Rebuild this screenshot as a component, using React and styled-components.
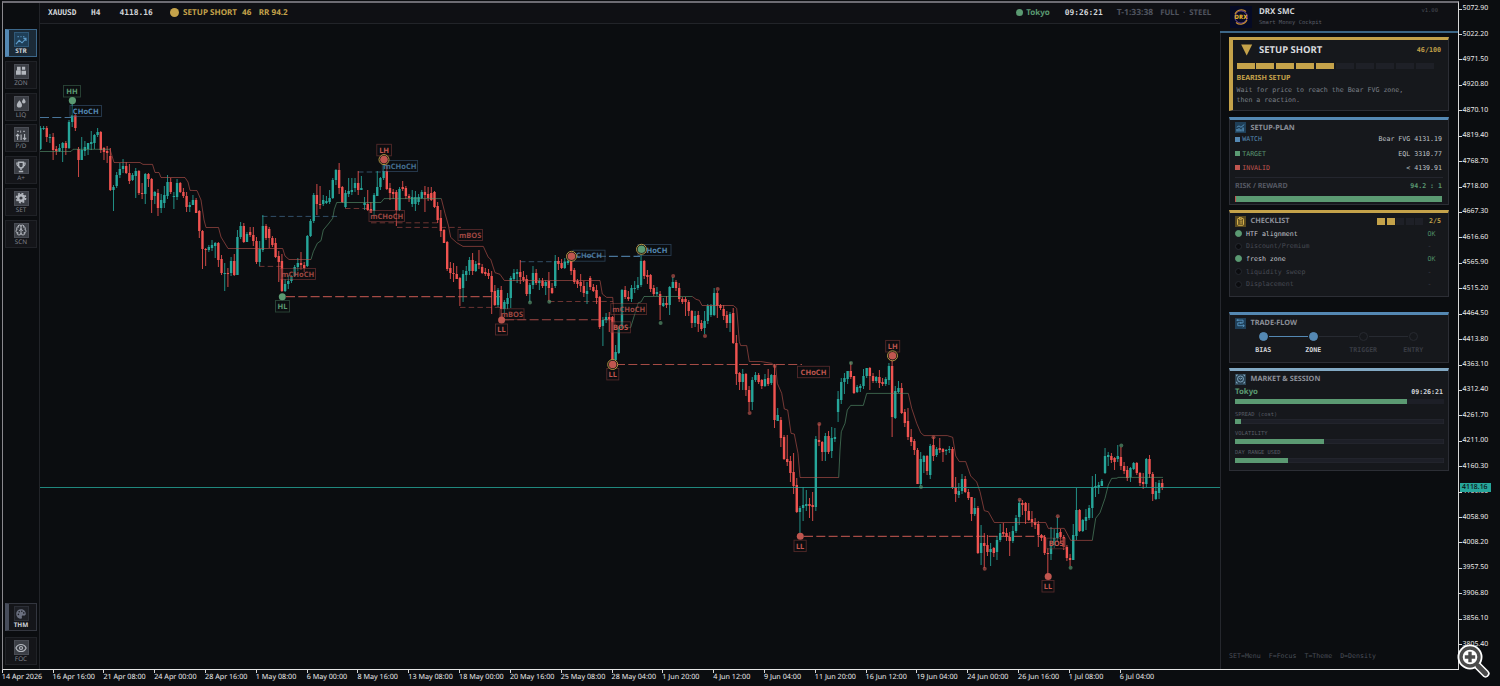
import React from 'react'
import styled, { createGlobalStyle } from 'styled-components'
import { Trophy, Brain, Eye, ClipboardList } from 'lucide-react'

const UP = '#26a69a';
const DOWN = '#f05350';
const GREEN = '#5b9a72';
const RED = '#c0564f';
const BLUE = '#5488b3';
const GOLD = '#c4a24a';

// each bar: direction, high, body top, body bottom, low
const BARS = `
u 126 128 149 150,u 126 128 129 130,d 126 128 137 142,u 134 137 138 143,d 133 137 150 160,d 146 149 151 155,u 144 148 151 152,u 142 143 148 162,
d 141 143 148 155,u 120 122 148 149,u 100 115 122 127,d 114 115 128 131,d 147 149 160 177,u 137 150 160 160,u 141 147 151 156,u 144 143 149 155,
u 131 142 144 150,u 134 135 143 149,u 128 132 135 137,d 131 132 150 153,d 147 148 152 160,d 146 151 153 163,d 148 156 190 191,u 185 187 190 211,
u 172 175 186 188,u 163 169 175 178,u 159 166 169 173,d 162 166 173 174,d 164 173 181 184,u 173 175 180 181,u 168 171 176 198,d 170 171 193 195,
d 183 193 194 199,u 173 174 194 204,d 173 174 179 187,d 178 179 200 213,u 191 192 196 204,d 189 193 208 216,u 194 200 208 213,u 186 195 203 208,
u 175 182 196 199,d 178 182 192 194,u 192 196 197 209,u 179 183 197 200,d 182 183 192 193,d 188 192 196 198,d 192 196 207 212,u 202 205 207 212,
u 195 200 205 205,d 198 200 213 213,d 210 211 231 238,d 230 231 249 269,d 248 249 250 266,u 245 247 250 252,u 240 245 248 251,u 242 243 246 258,
d 242 243 260 267,d 255 259 273 275,u 263 273 274 291,d 268 273 274 287,u 257 261 273 276,d 254 261 275 276,u 230 237 275 275,u 222 226 237 239,
d 223 226 242 243,u 232 234 242 242,d 227 232 235 237,d 227 235 241 246,d 237 241 262 264,u 241 249 262 266,u 215 226 250 252,d 224 226 238 240,
d 227 229 238 248,d 236 238 245 247,d 238 243 257 258,d 251 256 262 282,d 254 261 291 292,u 279 284 291 292,u 275 281 284 289,u 275 277 281 283,
u 265 267 276 277,u 258 263 267 271,d 252 263 265 270,d 262 265 268 272,u 235 236 266 267,u 219 221 236 237,u 193 195 221 223,d 184 195 204 215,
d 186 204 205 209,u 195 200 204 206,u 196 201 203 204,u 190 198 202 204,u 178 180 198 199,u 169 170 180 185,d 163 170 188 194,d 186 187 202 203,
u 190 193 207 208,u 178 191 194 197,u 178 190 192 195,u 178 183 188 192,d 171 183 190 195,u 176 188 190 190,u 197 203 205 210,d 190 204 210 211,
d 202 209 213 213,u 193 195 211 216,u 171 187 196 196,u 177 178 187 190,u 162 171 178 180,d 163 171 189 190,d 183 188 193 200,d 189 192 194 199,
d 190 192 210 226,u 187 189 210 211,d 181 187 189 191,d 186 188 196 199,d 194 196 198 202,u 190 197 204 207,u 191 197 204 211,u 194 197 202 205,
u 190 192 198 199,d 186 192 195 212,d 187 194 198 201,d 187 193 200 201,d 191 192 207 208,d 202 206 220 223,d 210 218 231 237,d 229 230 243 243,
d 241 242 269 271,d 262 268 273 279,d 263 273 274 282,d 266 274 279 279,d 277 278 289 306,u 270 274 288 302,u 266 271 275 281,u 257 260 271 275,
d 253 260 271 275,u 261 264 271 272,d 250 263 265 269,d 264 267 273 274,d 268 272 274 276,d 269 273 276 279,d 271 276 292 314,d 285 291 305 306,
u 288 290 305 307,d 286 290 309 319,u 300 302 309 313,u 293 298 304 309,u 276 278 298 308,u 269 273 279 281,u 269 272 274 283,d 260 272 277 284,
d 271 277 280 282,d 275 279 294 296,u 283 285 294 302,u 266 273 285 289,d 269 273 283 285,u 278 281 283 290,d 278 281 286 288,u 280 282 286 295,
d 272 281 288 301,d 283 288 293 294,u 255 261 286 288,d 257 261 264 270,d 259 263 268 269,u 258 262 268 269,u 256 261 263 265,d 257 261 271 275,
d 268 270 282 284,d 279 281 284 288,d 274 282 286 292,d 281 286 293 297,u 282 291 294 304,d 276 278 287 290,d 284 287 291 292,d 285 290 298 304,
d 296 297 327 329,u 317 320 326 346,u 313 317 320 323,d 312 317 319 332,d 316 317 360 362,u 345 352 360 362,u 326 327 353 354,u 289 290 327 329,
d 286 290 297 299,d 291 297 299 301,u 285 288 299 302,u 281 288 289 293,u 277 285 288 290,u 251 261 285 287,d 260 261 276 279,d 270 275 277 284,
d 274 275 289 292,d 285 288 294 296,u 287 292 294 296,d 291 294 305 320,u 298 303 306 307,d 296 303 305 308,u 286 287 305 315,u 277 282 288 288,
d 280 282 288 291,d 283 288 299 302,d 297 299 302 304,d 297 299 302 316,d 300 302 311 316,d 310 311 323 328,u 311 316 323 327,d 311 315 324 332,
d 320 323 329 331,u 311 321 328 334,u 304 306 321 324,u 304 306 315 317,u 288 293 315 316,d 291 293 306 318,d 304 305 308 310,d 305 309 316 320,
d 311 315 323 328,u 312 314 323 332,d 308 313 343 344,d 335 343 374 385,d 372 373 382 390,u 369 374 382 390,d 373 374 390 396,d 386 390 402 411,
u 377 380 402 410,u 372 375 380 382,d 373 375 382 384,d 379 380 386 389,u 374 379 386 387,d 369 378 384 386,u 374 375 383 385,d 364 375 420 428,
u 408 415 421 421,d 417 420 438 447,d 435 437 459 460,d 435 459 462 466,d 456 461 473 482,d 453 472 486 494,d 478 485 512 513,u 506 508 512 535,
u 487 505 508 521,u 490 504 506 511,d 498 504 506 518,d 492 505 507 521,u 436 439 507 511,d 424 440 442 446,d 441 442 452 461,u 433 436 452 461,
d 431 436 452 454,u 427 438 451 458,u 428 437 439 442,u 391 399 412 422,u 378 382 400 404,u 373 378 382 394,u 371 371 379 384,d 362 371 377 379,
d 376 376 393 394,u 385 387 392 393,u 384 386 388 392,u 369 376 386 389,u 368 368 376 378,d 367 368 376 390,d 373 376 381 383,u 376 377 381 383,
d 370 377 383 388,d 378 382 384 386,u 377 379 384 386,u 363 366 380 385,d 360 366 417 437,u 386 391 418 419,u 381 388 392 393,d 383 388 413 414,
d 409 412 423 427,d 408 421 437 440,d 429 437 442 446,d 439 441 450 455,d 448 450 484 484,u 452 459 484 486,u 455 456 462 473,d 455 456 471 475,
u 444 446 475 479,d 437 445 456 461,u 447 449 455 457,d 438 448 450 453,d 448 449 452 462,u 449 450 451 455,u 446 449 450 453,d 447 449 488 489,
d 477 487 494 502,u 483 491 495 498,u 474 479 491 494,d 476 479 492 493,d 489 492 498 500,d 497 497 514 521,u 498 508 514 516,d 506 508 553 554,
u 525 543 553 565,d 533 543 546 568,d 535 545 552 556,u 543 549 552 566,d 547 548 553 557,u 536 540 552 560,u 524 533 540 542,d 523 532 534 536,
d 528 533 537 541,d 532 537 541 556,u 526 531 541 543,u 515 518 531 533,u 500 503 517 525,d 500 503 505 515,d 502 503 511 524,d 503 511 520 521,
d 511 519 522 527,d 518 522 525 529,d 521 524 535 547,d 534 535 538 541,d 535 537 553 555,d 548 553 554 574,u 527 545 554 560,u 529 538 545 548,
u 517 533 538 541,d 529 532 537 544,d 535 537 547 550,d 545 547 558 561,d 554 558 560 566,u 524 535 560 560,u 488 510 536 540,d 509 510 531 532,
u 519 520 531 532,u 509 517 521 530,u 505 508 518 520,u 476 487 508 518,u 474 486 488 497,u 482 485 487 494,u 479 481 486 486,u 448 456 473 474,
u 452 455 457 466,d 453 456 460 463,d 457 458 462 470,u 445 456 459 462,d 447 457 466 470,d 462 466 471 474,d 466 470 478 481,u 467 468 477 482,
u 462 463 469 470,d 462 463 473 475,d 472 473 483 486,d 473 482 484 489,u 458 459 484 487,d 455 459 474 478,d 472 474 494 501,u 482 491 499 500,
u 480 483 493 499,d 479 483 488 490`.trim().split(',').map((bar) => {
    const [dir, high, top, bottom, low] = bar.trim().split(' ');
    return { up: dir === 'u', high: +high, top: +top, bottom: +bottom, low: +low };
});

const FIRST_X = 40.4;
const STEP = 3.178;

const TREND = [
    ['up', '40,151.5 71,151.5 73,149.3 110,149.3'],
    ['down', '110,149.3 114,162.5 140,162.5 143,164.4 152.5,164.4 155,172.5 159,172.5 161,177.5 185,177.5 188,182 190,190.4 197,190.6 201,200 204,220 206,227.5 218.5,227.5 221,237 228,248.5 282.7,248.5 285,256 289,259.5 311,259.5'],
    ['up', '311,259.5 313.3,251.7 317.3,243.3 321,240.7 323.3,230 328.3,224 332.7,218.3 334.3,209.3 336.7,202.5 381,202.5 384,198.6 441.3,198.6'],
    ['down', '441.3,198.6 445,213.3 448.3,225 450.7,237.3 456.7,242.7 463,246.4 483.3,246.4 488.3,257.3 490.7,259.3 495,272.7 500,274.3 504.3,280.5 600,280.5 602.3,294 606.7,297.4 612.7,297.4 615,326 617.7,327.4'],
    ['up', '617.7,327.4 630.7,327.4 635,313.3 638.3,302.7 641,302 644,296.5 692.3,296.5'],
    ['down', '692.3,296.5 696,299.3 699.3,300.3 702,305.5 733.3,305.5 736.7,308.3 739.3,341.7 740.7,345.6 746.7,345.6 749.3,361.5 760.7,361.5 771.7,363.3 775.7,366.7 777.3,383.3 781.7,393.3 784.3,409 787.7,410 791,433.3 794.3,434 798,453.3 800,477.5 838.7,477.5'],
    ['up', '838.7,477.5 840,450 841.3,431.7 845,423.3 847.3,410 850.7,405.4 863.3,405.4 866.7,393.4 908.3,393.4'],
    ['down', '908.3,393.4 911.7,408.3 916.7,423.3 920.7,432.7 924,435.6 947.3,435.6 952.7,437.3 955.7,456 959.3,461.6 965.7,461.6 970.7,476 976.7,482 980,491.7 984.3,510.7 988.3,511.7 994.3,522.5 1045.7,522.5 1048.3,528.4 1064.3,528.4 1070.7,540.4 1092.3,540.4'],
    ['up', '1092.3,540.4 1095.7,518.3 1100,512.7 1105,498.3 1108.3,485 1111.7,478.4 1117,478.2 1118,477.4 1163,477.4']
];

// x1, x2, y, colour, minor
const LEVELS = [
    [40, 72, 117.5, BLUE], [262, 338, 216.4, BLUE, true], [259, 282, 266.4, RED, true],
    [358, 384, 172, BLUE, true], [345, 371, 208.5, RED, true], [371, 440, 222.8, RED, true],
    [397, 461, 227.4, RED, true], [286, 500, 296.6, RED], [460, 501, 307.4, RED, true],
    [520, 566, 261.7, BLUE, true], [549, 613, 301.5, RED, true], [505, 612, 319.8, RED],
    [572, 640, 256.4, BLUE], [616, 802, 364.5, RED], [804, 1045, 536.4, RED]
];

// x, y, radius, colour, ring
const SWINGS = [
    [72.4, 100.6, 3.6, GREEN], [384, 159.6, 3.8, RED, true], [282.3, 296.8, 3.5, GREEN],
    [501.6, 320, 3.5, RED], [571.5, 256.3, 3.8, RED, true], [641.5, 249.3, 3.8, GREEN, true],
    [612.7, 364.5, 3.8, RED, true], [800.3, 536.2, 3.5, RED], [892.5, 355.8, 3.8, RED, true],
    [1048.2, 576.6, 3.5, RED]
];

const PIVOTS = [
    [530, 302.4, 'g'], [549.3, 301.8, 'g'], [673.2, 276], [717.7, 289], [660.6, 323, 'g'], [705, 336],
    [774.7, 366], [749.6, 413], [819.3, 424], [851, 363, 'g'], [933.5, 437.2], [921, 487, 'g'],
    [1019.7, 499.7], [984.7, 568.7], [1057.8, 516.3], [1070.6, 567.8, 'g'], [1121.3, 445.5, 'g']
];

// text, x, y, width, height, colour, dimmed
const TAGS = [
    ['HH', 63.5, 85.5, 17, 11.5, GREEN], ['CHoCH', 70, 105.5, 31.5, 11, BLUE],
    ['mCHoCH', 280, 268.5, 35.5, 11, RED, true], ['HL', 275.5, 300.5, 14, 11.5, GREEN],
    ['LH', 376.8, 144.3, 14.6, 11.5, RED], ['mCHoCH', 382.3, 160.5, 35.3, 11, BLUE, true],
    ['mCHoCH', 369, 210.5, 35.5, 11, RED, true], ['mBOS', 458, 229.5, 24.5, 11, RED, true],
    ['mBOS', 500, 308.8, 24, 10.8, RED, true], ['LL', 495.5, 324, 12, 11, RED],
    ['CHoCH', 573, 250.2, 32, 11, BLUE, true], ['CHoCH', 638, 244.5, 33, 11, BLUE],
    ['mCHoCH', 610.8, 303.6, 35.8, 11, RED, true], ['BOS', 610.8, 321.8, 19.6, 11, RED],
    ['LL', 606.8, 368.5, 12, 11.4, RED], ['CHoCH', 797.5, 366.3, 32, 11.4, RED],
    ['LL', 794, 540.2, 12.2, 11.4, RED], ['LH', 885.7, 340.4, 14, 11.6, RED],
    ['BOS', 1046.8, 538.2, 18.8, 10.6, RED], ['LL', 1042, 580.5, 12, 11.5, RED]
];

const TIMES = ['14 Apr 2026', '16 Apr 16:00', '21 Apr 08:00', '24 Apr 00:00', '28 Apr 16:00', '1 May 08:00',
    '6 May 00:00', '8 May 16:00', '13 May 08:00', '18 May 00:00', '20 May 16:00', '25 May 08:00', '28 May 04:00',
    '1 Jun 20:00', '4 Jun 12:00', '9 Jun 04:00', '11 Jun 20:00', '16 Jun 12:00', '19 Jun 04:00', '24 Jun 00:00',
    '26 Jun 16:00', '1 Jul 08:00', '6 Jul 04:00'];

const PRICES = Array.from({ length: 26 }, (_, i) => (5072.9 - i * 50.7).toFixed(2));

const GlobalStyle = createGlobalStyle`
    * {
        box-sizing: border-box;
    }
    body {
        margin: 0;
        background-color: #0b0d10;
        overflow: hidden;
        font-family: "Noto Sans", sans-serif;
        text-rendering: geometricPrecision;
    }
`;
const Terminal = styled.div`
    width: 1500px;
    height: 686px;
    display: grid;
    grid-template-columns: 1459px 41px;
    grid-template-rows: 670px 16px;
    background-color: #0b0d10;
`;
const Frame = styled.div`
    margin: 1px 0 0 2px;
    display: flex;
    border-top: 2px solid #6d6c73;
    border-left: 1px solid #8a898e;
    border-right: 1px solid #d8d8d8;
    border-bottom: 1px solid #e6e6e6;
`;
const Rail = styled.div`
    width: 37px;
    padding: 26px 2px 4px;
    display: flex;
    flex-direction: column;
    gap: 3.8px;
    border-right: 1px solid #222429;
`;
const Spacer = styled.div`
    flex: ${(p) => (p.$size ? `0 0 ${p.$size}px` : '1')};
`;
const RailButton = styled.div`
    height: 28px;
    flex-shrink: 0;
    display: flex;
    flex-direction: column;
    align-items: center;
    padding: 2px 3px 0 0;
    margin-bottom: ${(p) => p.$last || 0}px;
    border: 1px solid ${(p) => (p.$tone === 'blue' ? '#3c678a' : p.$tone === 'grey' ? '#33363f' : '#202227')};
    border-left: ${(p) => (p.$tone ? '4px solid' : '1px solid')} ${(p) => (p.$tone === 'blue' ? '#5488b3' : p.$tone === 'grey' ? '#474d5b' : '#202227')};
    padding-left: ${(p) => (p.$tone ? 0 : 3)}px;
    background-color: ${(p) => (p.$tone === 'blue' ? '#1b2a37' : '#141519')};
    color: ${(p) => (p.$tone ? '#d2d5d9' : '#7d8089')};
    font-size: 6.4px;
    font-weight: ${(p) => (p.$tone ? 700 : 400)};
    line-height: 8.6px;
`;
const IconBox = styled.div`
    width: ${(p) => p.$size || 15}px;
    height: ${(p) => p.$size || 15}px;
    flex-shrink: 0;
    display: flex;
    align-items: center;
    justify-content: center;
    background-color: ${(p) => p.$bg || '#3b3e45'};
    border: 1px solid ${(p) => p.$edge || '#4a4d55'};
    color: ${(p) => p.$color || '#b3b7be'};
`;
const Main = styled.div`
    width: 1180px;
    display: flex;
    flex-direction: column;
`;
const TopBar = styled.div`
    height: 21px;
    flex-shrink: 0;
    display: flex;
    align-items: center;
    padding: 0 8px 0.6px 8px;
    background-color: #0f1014;
    border-bottom: 1px solid #222429;
    white-space: pre;
`;
const Mono = styled.span`
    font-family: "DejaVu Sans Mono", monospace;
    font-size: ${(p) => p.$size || 6.6}px;
    font-weight: ${(p) => (p.$bold ? 700 : 400)};
    color: ${(p) => p.$color || '#d2d5d9'};
    margin-left: ${(p) => p.$left || 0}px;
    line-height: 10px;
    white-space: pre;
`;
const Label = styled.span`
    font-size: ${(p) => p.$size || 8}px;
    font-weight: 700;
    color: ${(p) => p.$color || '#8b8f98'};
    margin-left: ${(p) => p.$left || 0}px;
    line-height: 12px;
    white-space: pre;
`;
const Dot = styled.span`
    width: ${(p) => p.$size || 8}px;
    height: ${(p) => p.$size || 8}px;
    border-radius: 50%;
    flex-shrink: 0;
    margin-left: ${(p) => p.$left || 0}px;
    background-color: ${(p) => p.$color};
    border: ${(p) => (p.$edge ? `1px solid ${p.$edge}` : 'none')};
`;
const Chart = styled.svg`
    display: block;
    width: 1180px;
    height: 645px;
`;
const Side = styled.div`
    width: 238px;
    display: flex;
    flex-direction: column;
`;
const Brand = styled.div`
    height: 30px;
    flex-shrink: 0;
    display: flex;
    padding: 3px 20px 0 9.5px;
    background-color: #0f1014;
    border-bottom: 2px solid #3d6787;
`;
const BrandText = styled.div`
    flex: 1;
    display: flex;
    flex-direction: column;
    margin-left: 7.5px;
`;
const Cards = styled.div`
    flex: 1;
    display: flex;
    flex-direction: column;
    padding: 4.4px 9px 8px 8px;
    border-left: 1px solid #25272d;
`;
const Card = styled.div`
    height: ${(p) => p.$height}px;
    margin-bottom: ${(p) => p.$after}px;
    flex-shrink: 0;
    display: flex;
    flex-direction: column;
    background-color: #16181c;
    border: 1px solid #2c2e35;
    border-top: 3px solid ${(p) => p.$accent};
    border-left: ${(p) => (p.$thick ? `4.5px solid ${p.$accent}` : '1px solid #2c2e35')};
    padding: ${(p) => p.$pad || '2px 5px 0 5px'};
`;
const Row = styled.div`
    height: ${(p) => p.$height}px;
    flex-shrink: 0;
    display: flex;
    align-items: center;
    margin-top: ${(p) => p.$top || 0}px;
`;
const Segment = styled.div`
    width: ${(p) => p.$width}px;
    height: ${(p) => p.$height}px;
    margin-right: ${(p) => p.$gap}px;
    background-color: ${(p) => (p.$on ? GOLD : '#1e2027')};
`;
const Square = styled.span`
    width: 5px;
    height: 5px;
    background-color: ${(p) => p.$color};
`;
const Rule = styled.div`
    height: 1px;
    flex-shrink: 0;
    margin-top: 2px;
    background-color: #24262e;
`;
const Track = styled.div`
    height: ${(p) => p.$height}px;
    width: ${(p) => p.$width || 209}px;
    flex-shrink: 0;
    margin-top: ${(p) => p.$top || 0}px;
    margin-bottom: ${(p) => p.$after || 0}px;
    background-color: #1d1f27;
    box-shadow: ${(p) => (p.$edge ? 'inset 0 0 0 0.5px #282a33' : 'none')};
`;
const Fill = styled.div`
    height: 100%;
    background-color: ${GREEN};
    border-left: ${(p) => (p.$risk ? `1px solid ${RED}` : 'none')};
`;
const Steps = styled.div`
    display: flex;
    margin: 2.5px 0 0 3.2px;
`;
const Step = styled.div`
    width: 50px;
    display: flex;
    flex-direction: column;
    align-items: center;
    gap: 3px;
`;
const StepTrack = styled.div`
    width: 50px;
    height: 10px;
    display: grid;
    grid-template-columns: 1fr 9px 1fr;
    align-items: center;
    column-gap: 1px;
`;
const Link = styled.div`
    height: 1px;
    background-color: ${(p) => p.$color};
`;
const Hints = styled.div`
    margin-top: auto;
    height: 10.5px;
    display: flex;
`;
const PriceAxis = styled.div`
    position: relative;
    overflow: hidden;
`;
const PriceLabel = styled.div`
    height: 25.43px;
    display: flex;
    align-items: center;
    margin-top: ${(p) => (p.$first ? -3.6 : 0)}px;
    color: #ececec;
    font-size: 6.9px;
    line-height: 10px;
    &::before {
        content: '';
        width: 3px;
        height: 1px;
        margin-right: 0.6px;
        background-color: #d8d8d8;
    }
`;
const PriceNow = styled.div`
    position: absolute;
    left: 1px;
    top: 483px;
    width: 31px;
    height: 9px;
    padding-left: 2px;
    background-color: ${UP};
    color: #0b0d10;
    font-size: 6.9px;
    font-weight: 500;
    line-height: 9px;
`;
const TimeAxis = styled.div`
    grid-column: 1 / 3;
    display: flex;
    padding-left: 1.8px;
`;
const TimeLabel = styled.div`
    width: 50.82px;
    flex-shrink: 0;
    color: #ececec;
    font-size: 7.2px;
    line-height: 9px;
    white-space: nowrap;
    &::before {
        content: '';
        display: block;
        width: 1px;
        height: 3px;
        background-color: #d8d8d8;
    }
`;
const Magnifier = styled.svg`
    position: absolute;
    left: 1455.5px;
    top: 642px;
    width: 34px;
    height: 36px;
`;

const Glyph = ({ size = 12, children }) => (
    <svg width={size} height={size} viewBox="0 0 12 12" fill="none" stroke="currentColor" strokeWidth="1.1">
        {children}
    </svg>
)

const StructureIcon = () => (
    <Glyph>
        <path d="M1 10.2L4.2 6.4L7 8.8L11 4.6M8.4 4.4H11V7" />
        <path d="M2.4 2.6h1.6M5.4 2.6h1.2M8 2.6h1.4" opacity="0.75" />
    </Glyph>
)
const ZonesIcon = () => (
    <Glyph>
        <g fill="currentColor" stroke="none">
            <path d="M2 1.8h3.6v4H2zM7 1.8h3.2v3H7z" />
            <path d="M1 5.4h4.8v4.4H1zM6.5 5.8h4.5v4H6.5z" />
        </g>
    </Glyph>
)
const LiquidityIcon = () => (
    <Glyph>
        <g fill="currentColor" stroke="none">
            <path d="M4.4 3.2C5.8 5.2 7 6.4 7 8A2.6 2.6 0 0 1 1.8 8C1.8 6.4 3.2 5.2 4.4 3.2z" />
            <path d="M8.8 1.2C9.8 2.8 10.6 3.6 10.6 4.8A1.8 1.8 0 0 1 7 4.8C7 3.6 8 2.8 8.8 1.2z" />
        </g>
    </Glyph>
)
const PremiumIcon = () => (
    <Glyph>
        <path d="M2.6 11V5.8M1 7.2L2.6 5.4L4.2 7.2M9.6 5v5.2M8 8.8l1.6 1.8L11.2 8.8M6.1 5.4V11" />
        <path d="M2 2.4h2M5.6 1.6v2.2M8 2.4h2" opacity="0.75" />
    </Glyph>
)
const GearIcon = () => (
    <Glyph>
        <circle cx="6" cy="6" r="2.8" strokeWidth="2.4" />
        <circle cx="6" cy="6" r="4.6" strokeWidth="1.6" strokeDasharray="1.9 1.7" />
    </Glyph>
)
const PaletteIcon = () => (
    <Glyph>
        <path d="M6 1.2A4.8 4.8 0 1 0 6 10.8C7.2 10.8 7 9.6 6.8 8.8C6.6 7.8 7.4 7.4 8.4 7.6C10 7.8 10.8 7 10.8 5.8C10.8 3.2 8.6 1.2 6 1.2z" fill="currentColor" stroke="none" />
        <g fill="#1d1f25" stroke="none">
            <circle cx="3.4" cy="6.4" r="0.8" />
            <circle cx="4.2" cy="3.8" r="0.8" />
            <circle cx="6.8" cy="3.2" r="0.8" />
            <circle cx="8.8" cy="4.9" r="0.8" />
        </g>
    </Glyph>
)
const MedalIcon = () => (
    <Glyph>
        <path d="M3.6 1.2h4.8v3.4a2.4 2.4 0 0 1-4.8 0zM6 7v2M3.8 10.4h4.4" strokeWidth="1.5" />
        <path d="M3.4 2H1.8c0 2 .6 2.8 1.8 3M8.6 2h1.6c0 2-.6 2.8-1.8 3" />
    </Glyph>
)
const TrophyBase = () => <Trophy size={11} strokeWidth={2.6} />
const ScanIcon = () => <Brain size={12} strokeWidth={2} />
const FocusIcon = () => <Eye size={12} strokeWidth={2.4} />
const PlanIcon = () => (
    <Glyph size={10}>
        <path d="M1.4 10.6V7.4M4 10.6V6.2M6.6 10.6V7.6M9.4 10.6V5.4" strokeWidth="1.6" />
        <path d="M1 5L4 3.2L6.6 5L11 1.4" />
    </Glyph>
)
const ChecklistIcon = () => <ClipboardList size={9} strokeWidth={2.6} />
const FlowIcon = () => (
    <Glyph size={10}>
        <path d="M0.6 2.2H9.4V5.8H2.4V9.6H11M9 7.8l2 1.8l-2 1.8M2.4 0.8v2.6M6.4 4.4v2.8" />
    </Glyph>
)
const SessionIcon = () => (
    <Glyph size={10}>
        <circle cx="6" cy="6" r="4" />
        <path d="M4.4 4.6L6 6.4L8 4.8M0.6 2.4V0.6h1.8M11.4 9.6v1.8H9.6M0.6 9.6v1.8h1.8M11.4 2.4V0.6H9.6" />
    </Glyph>
)

const RailItem = ({ icon: Icon, text, tone, last }) => (
    <RailButton $tone={tone} $last={last}>
        <IconBox
            $bg={tone === 'blue' ? '#1f3f58' : tone === 'grey' ? '#1d1f25' : undefined}
            $edge={tone === 'blue' ? '#2f5878' : tone === 'grey' ? '#2b2e36' : undefined}
            $color={tone === 'blue' ? '#5e9cc9' : tone === 'grey' ? '#6b7080' : undefined}
        >
            <Icon />
        </IconBox>
        {text}
    </RailButton>
)

const CardTitle = ({ icon: Icon, text, color, bg, children }) => (
    <Row $height={12}>
        <IconBox $size={11} $bg={bg} $edge={bg} $color={color}>
            <Icon />
        </IconBox>
        <Label $size={7.3} $left={4.5}>{text}</Label>
        {children}
    </Row>
)

const PlanRow = ({ color, name, value, top }) => (
    <Row $height={14.1} $top={top}>
        <Square $color={color} />
        <Mono $left={2.2} $color={color}>{name}</Mono>
        <Spacer />
        <Mono $color="#bfc2c7">{value}</Mono>
        <Spacer $size={1} />
    </Row>
)

const CheckRow = ({ on, name }) => (
    <Row $height={12.7}>
        <Dot $size={7} $color={on ? GREEN : '#0b0c0f'} $edge={on ? GREEN : '#25282f'} />
        <Mono $left={4} $color={on ? '#c4c7cc' : '#474a53'}>{name}</Mono>
        <Spacer />
        <Mono $color={on ? '#4c8a66' : '#474a53'}>{on ? 'OK' : '- '}</Mono>
        <Spacer $size={7.5} />
    </Row>
)

const FlowStep = ({ name, on, left, right }) => (
    <Step>
        <StepTrack>
            <Link $color={left || 'transparent'} />
            <Dot $size={9} $color={on ? BLUE : '#16181c'} $edge={on ? BLUE : '#272a31'} />
            <Link $color={right || 'transparent'} />
        </StepTrack>
        <Mono $bold $size={6.6} $color={on ? '#d2d5d9' : '#3a3d45'}>{name}</Mono>
    </Step>
)

const Meter = ({ name, value }) => (
    <>
        <Row $height={9} $top={5.1}>
            <Mono $size={5.4} $color="#595d66">{name}</Mono>
        </Row>
        <Track $height={5} $edge><Fill style={{ width: `${value}%` }} /></Track>
    </>
)

const PriceChart = () => (
    <Chart viewBox="40 24 1180 645">
        {LEVELS.map(([x1, x2, y, color, minor], i) => (
            <line key={i} x1={x1} x2={x2} y1={y} y2={y} stroke={color} strokeWidth={minor ? 0.9 : 1.1}
                strokeDasharray={minor ? '5.5 3.2' : '9 3.3'} opacity={minor ? 0.6 : 0.85} />
        ))}
        {BARS.map((bar, i) => {
            const x = FIRST_X + i * STEP;
            const color = bar.up ? UP : DOWN;
            return (
                <g key={i} fill={color}>
                    <rect x={x - 0.5} y={bar.high} width="1" height={bar.low - bar.high} opacity="0.85" />
                    <rect x={x - 1.2} y={bar.top} width="2.4" height={Math.max(bar.bottom - bar.top, 1)} />
                </g>
            )
        })}
        {TREND.map(([dir, points], i) => (
            <polyline key={i} points={points} fill="none" stroke={dir === 'up' ? GREEN : RED} strokeWidth="0.9" opacity="0.65" />
        ))}
        <rect x="40" y="487" width="1180" height="1" fill={UP} opacity="0.8" />
        {PIVOTS.map(([x, y, tone], i) => (
            <circle key={i} cx={x} cy={y} r="2" fill={tone ? GREEN : RED} opacity="0.65" />
        ))}
        {TAGS.map(([text, x, y, w, h, color, dim], i) => (
            <g key={i}>
                <rect x={x} y={y} width={w} height={h} fill="#0b0d10" fillOpacity="0.35" stroke={color} strokeOpacity="0.4" strokeWidth="0.9" />
                <text x={x + w / 2} y={y + h / 2 + 2.7} textAnchor="middle" fill={color} opacity={dim ? 0.8 : 1}
                    fontSize="7.5" fontWeight="700">{text}</text>
            </g>
        ))}
        {SWINGS.map(([x, y, r, color, ring], i) => (
            <g key={i}>
                {ring && <circle cx={x} cy={y} r="5" fill="#0b0d10" stroke={GOLD} strokeWidth="0.9" />}
                <circle cx={x} cy={y} r={r} fill={color} />
            </g>
        ))}
    </Chart>
)

const App = () => {
    return (
        <Terminal>
            <GlobalStyle />
            <Frame>
                <Rail>
                    <RailItem icon={StructureIcon} text="STR" tone="blue" />
                    <RailItem icon={ZonesIcon} text="ZON" />
                    <RailItem icon={LiquidityIcon} text="LIQ" />
                    <RailItem icon={PremiumIcon} text="P/D" />
                    <RailItem icon={MedalIcon} text="A+" />
                    <RailItem icon={GearIcon} text="SET" />
                    <RailItem icon={ScanIcon} text="SCN" />
                    <Spacer />
                    <RailItem icon={PaletteIcon} text="THM" tone="grey" last={2} />
                    <RailItem icon={FocusIcon} text="FOC" />
                </Rail>
                <Main>
                    <TopBar>
                        <Mono $bold $size={7.9}>XAUUSD</Mono>
                        <Mono $bold $size={7.9} $left={14.5}>H4</Mono>
                        <Mono $bold $size={7.9} $left={19}>4118.16</Mono>
                        <Dot $size={9} $color={GOLD} $left={16.8} />
                        <Label $size={8.1} $color={GOLD} $left={4.5}>SETUP SHORT</Label>
                        <Label $size={8.1} $color={GOLD} $left={5}>46</Label>
                        <Label $size={8.1} $color={GOLD} $left={7.5}>RR 94.2</Label>
                        <Spacer />
                        <Dot $size={7.5} $color={GREEN} />
                        <Label $size={8} $color={GREEN} $left={3}>Tokyo</Label>
                        <Mono $bold $size={7.9} $left={15}>09:26:21</Mono>
                        <Label $size={8.5} $color="#50545f" $left={14}>T-1:33:38</Label>
                        <Label $size={7.8} $color="#50545f" $left={7}>FULL  ·  STEEL</Label>
                        <Spacer $size={0.8} />
                    </TopBar>
                    <PriceChart />
                </Main>
                <Side>
                    <Brand>
                        <svg width="22" height="22" viewBox="0 0 22 22">
                            <rect width="22" height="22" fill="#050a24" />
                            <circle cx="11" cy="11" r="6.2" fill="none" stroke="#7a4fa8" strokeWidth="1" />
                            <path d="M5 8a7 7 0 0 1 11-2.5M17 14a7 7 0 0 1-11 2.5" fill="none" stroke="#c98f2e" strokeWidth="1.1" />
                            <text x="11" y="13.2" textAnchor="middle" fontSize="6" fontWeight="800" fill="#e8b62c" textLength="13">DRX</text>
                        </svg>
                        <BrandText>
                            <Label $size={8} $color="#d2d5d9">DRX SMC</Label>
                            <Mono $size={5.5} $color="#5a5e68">Smart Money Cockpit</Mono>
                        </BrandText>
                        <Mono $size={5.5} $color="#4a4d56">v1.00</Mono>
                    </Brand>
                    <Cards>
                        <Card $height={73.6} $after={6} $accent={GOLD} $thick $pad="3px 3px 0 3.5px">
                            <Row $height={13}>
                                <Spacer $size={3} />
                                <svg width="13" height="12" viewBox="0 0 13 12">
                                    <path d="M1.2 0.5h11L6.7 11.5z" fill={GOLD} />
                                </svg>
                                <Label $size={9.5} $color="#d8dade" $left={6.5}>SETUP SHORT</Label>
                                <Spacer />
                                <Mono $bold $size={6.7} $color={GOLD}>46/100</Mono>
                                <Spacer $size={4} />
                            </Row>
                            <Row $height={6} $top={6.5}>
                                {Array.from({ length: 10 }, (_, i) => (
                                    <Segment key={i} $width={18} $height={6} $gap={1.9} $on={i < 5} />
                                ))}
                            </Row>
                            <Row $height={12} $top={3.6}>
                                <Label $size={7.1} $color={GOLD}>BEARISH SETUP</Label>
                            </Row>
                            <Row $height={10.5}><Mono $color="#7c8089">Wait for price to reach the Bear FVG zone,</Mono></Row>
                            <Row $height={10.5}><Mono $color="#7c8089">then a reaction.</Mono></Row>
                        </Card>
                        <Card $height={87.6} $after={5.6} $accent={BLUE}>
                            <CardTitle icon={PlanIcon} text="SETUP-PLAN" color="#5e9cc9" bg="#1f3f58" />
                            <PlanRow color={BLUE} name="WATCH" value="Bear FVG 4131.19" top={-1.6} />
                            <PlanRow color={GREEN} name="TARGET" value="EQL 3310.77" />
                            <PlanRow color={RED} name="INVALID" value="< 4139.91" />
                            <Rule />
                            <Row $height={12} $top={2.8}>
                                <Label $size={7.1} $color="#555963">RISK / REWARD</Label>
                                <Spacer />
                                <Mono $bold $color={GREEN}>94.2 : 1</Mono>
                                <Spacer $size={1} />
                            </Row>
                            <Track $height={6} $top={3.7} $width={206.7}><Fill $risk /></Track>
                        </Card>
                        <Card $height={87} $after={15} $accent={GOLD}>
                            <CardTitle icon={ChecklistIcon} text="CHECKLIST" color="#d8b24c" bg="#58491f">
                                <Spacer />
                                {Array.from({ length: 5 }, (_, i) => (
                                    <Segment key={i} $width={8} $height={7} $gap={1.6} $on={i < 2} />
                                ))}
                                <Mono $bold $left={4} $color={GOLD}>2/5</Mono>
                                <Spacer $size={2} />
                            </CardTitle>
                            <CheckRow on name="HTF alignment" />
                            <CheckRow name="Discount/Premium" />
                            <CheckRow on name="fresh zone" />
                            <CheckRow name="liquidity sweep" />
                            <CheckRow name="Displacement" />
                        </Card>
                        <Card $height={50.5} $after={5.5} $accent={BLUE}>
                            <CardTitle icon={FlowIcon} text="TRADE-FLOW" color="#5e9cc9" bg="#1f3f58" />
                            <Steps>
                                <FlowStep name="BIAS" on right={BLUE} />
                                <FlowStep name="ZONE" on left={BLUE} right="#272a31" />
                                <FlowStep name="TRIGGER" left="#272a31" right="#272a31" />
                                <FlowStep name="ENTRY" left="#272a31" />
                            </Steps>
                        </Card>
                        <Card $height={103} $after={0} $accent="#82a9c4">
                            <CardTitle icon={SessionIcon} text="MARKET &amp; SESSION" color="#8bb4cf" bg="#2c4454" />
                            <Row $height={13}>
                                <Label $size={7.8} $color={GREEN}>Tokyo</Label>
                                <Spacer />
                                <Mono $bold>09:26:21</Mono>
                            </Row>
                            <Track $height={5} $top={1} $after={1.2}><Fill style={{ width: '82.5%' }} /></Track>
                            <Meter name="SPREAD (cost)" value={3} />
                            <Meter name="VOLATILITY" value={42.5} />
                            <Meter name="DAY RANGE USED" value={25.5} />
                        </Card>
                        <Hints>
                            <Mono $size={6.6} $color="#4a4d58">SET=Menu  F=Focus  T=Theme  D=Density</Mono>
                        </Hints>
                    </Cards>
                </Side>
            </Frame>
            <PriceAxis>
                {PRICES.map((price, i) => <PriceLabel key={price} $first={i === 0}>{price}</PriceLabel>)}
                <PriceNow>4118.16</PriceNow>
            </PriceAxis>
            <TimeAxis>
                {TIMES.map((time) => <TimeLabel key={time}>{time}</TimeLabel>)}
            </TimeAxis>
            <Magnifier viewBox="0 0 34 36">
                <path d="M22 24l7.5 7.5" stroke="#fff" strokeWidth="8" strokeLinecap="round" />
                <circle cx="14" cy="15" r="12.5" fill="#fff" />
                <path d="M22 24l7.5 7.5" stroke="#4b4b4b" strokeWidth="5" strokeLinecap="round" />
                <circle cx="14" cy="15" r="9" fill="#fff" stroke="#4b4b4b" strokeWidth="3.4" />
                <path d="M14 9.8v10.4M8.8 15h10.4" stroke="#4b4b4b" strokeWidth="3.4" />
            </Magnifier>
        </Terminal>
    )
}

export default App
